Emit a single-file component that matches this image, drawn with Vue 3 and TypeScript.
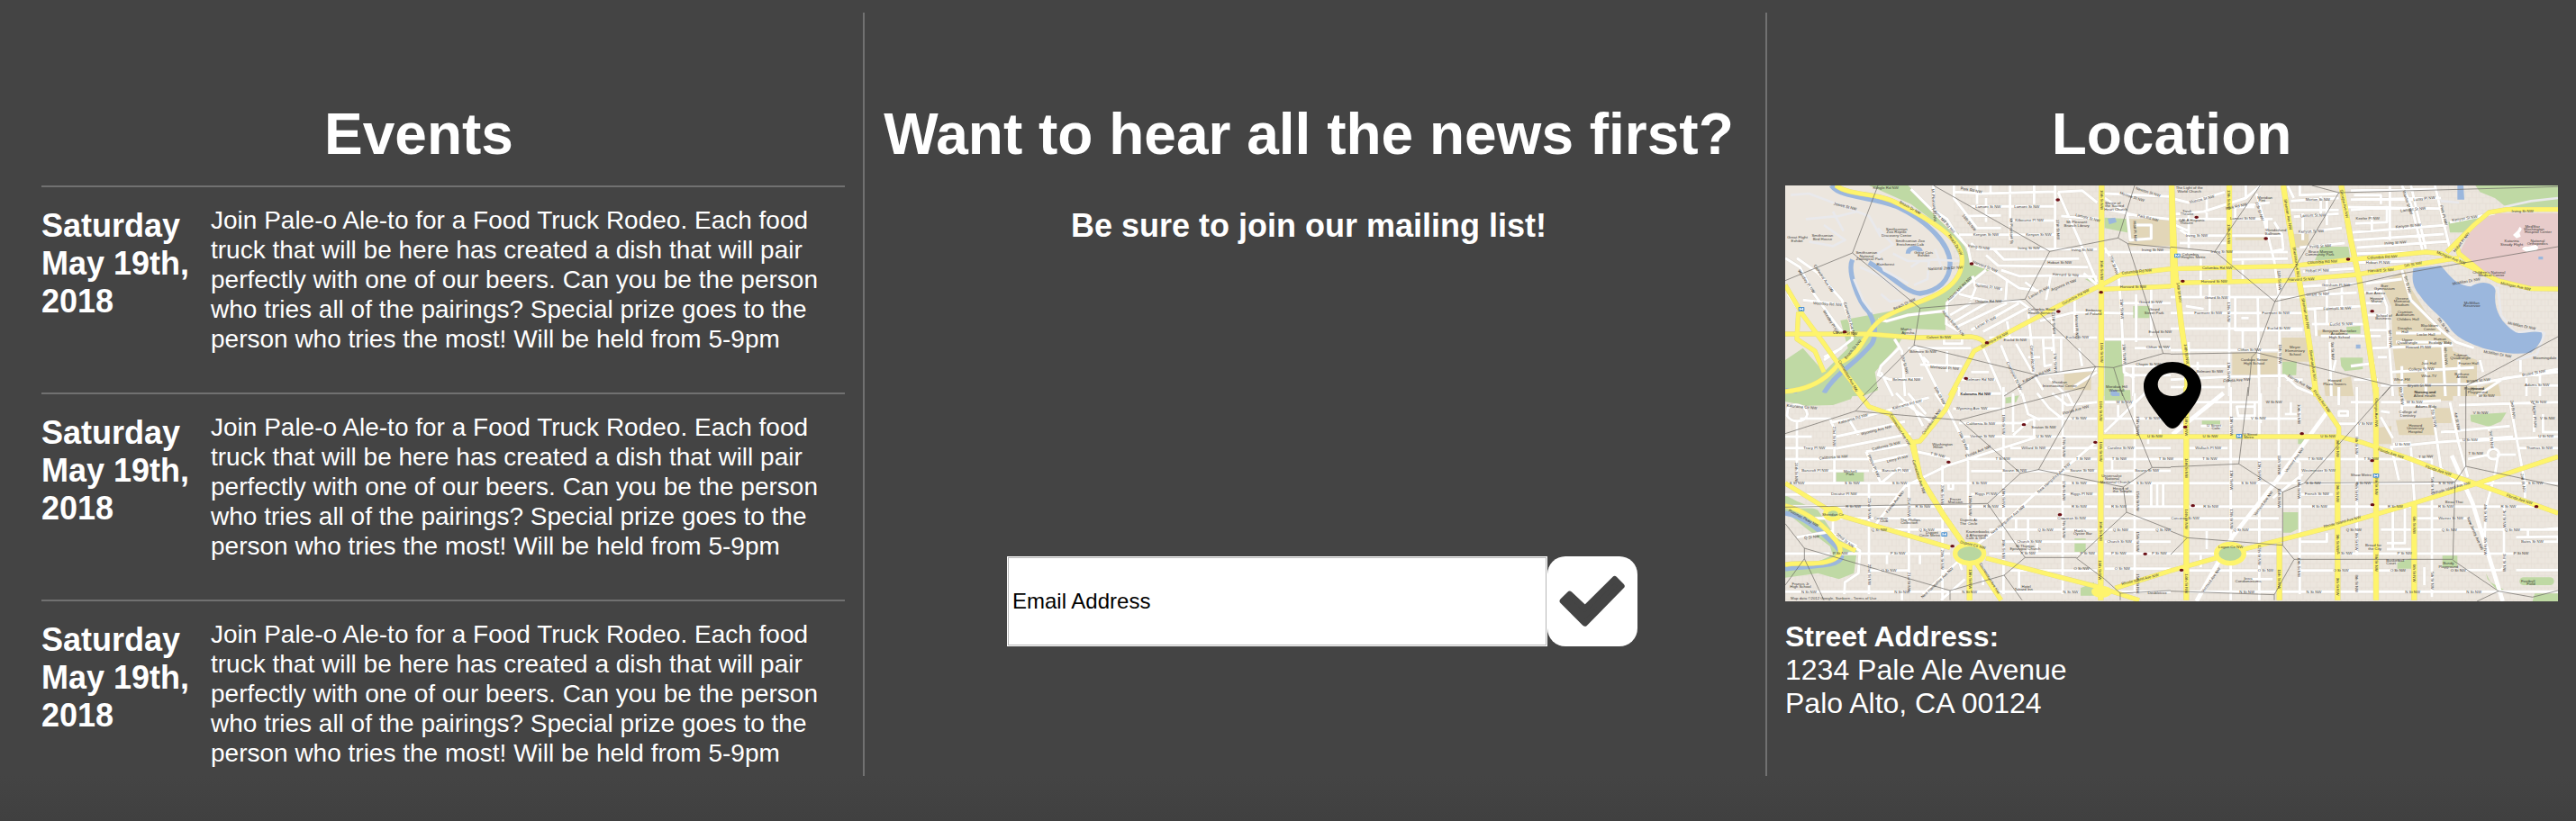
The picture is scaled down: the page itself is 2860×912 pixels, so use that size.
<script setup lang="ts">
import { ref } from 'vue'

interface EventItem {
  id: number
  date: string
  text: string
}

// x, y, rotation in degrees, text
type Label = [number, number, number, string]

interface Quarter {
  id: string
  move: string
  parks: string
  campus: string
  clinic: string
  lanes: string
  streets: string
  water: string
  river: string
  roads: string
  avenues: string
  zones: string
  stops: [number, number][]
  metros: [number, number][]
  labels: Label[]
}

const email = ref('')

const events: EventItem[] = [1, 2, 3].map((id) => ({
  id,
  date: 'Saturday May 19th, 2018',
  text: 'Join Pale-o Ale-to for a Food Truck Rodeo. Each food truck that will be here has created a dish that will pair perfectly with one of our beers. Can you be the person who tries all of the pairings? Special prize goes to the person who tries the most! Will be held from 5-9pm',
}))

const quarters: Quarter[] = [
  {
    id: 'north-west',
    move: 'translate(-21 -18)',
    parks:
      'M300 18H430L600 180 640 270 700 300 590 370 555 430V500L430 495 390 560 320 640 330 700 280 720H21V600L80 560 150 640 230 560 205 468 330 445 450 422 590 340 610 270 560 170 440 80ZM1085 125 1170 130 1175 178 1085 160ZM1085 530H1145L1150 720H1085ZM1180 420H1235V460H1180ZM1020 330 1055 325V350Z',
    campus: 'M1165 130H1305V220H1165ZM950 640H1040V700H950Z',
    clinic: '',
    lanes:
      'M40 50 100 45 220 90 300 120 340 190M90 130 200 120 260 105M150 150 220 200 180 220 100 205M180 105 215 170M330 160 380 215 330 245 350 300 430 345M440 290 470 270 520 265 600 270M380 245 430 270 500 270 495 330 450 350M520 230 545 300M250 330 280 400 310 440M340 380 370 405 410 400M270 290 340 320 400 370',
    streets:
      'M515 18V100L560 130 590 180 630 225 640 275M440 30 520 110 610 200M583 18V60L660 160H740M583 40 690 45 920 38M640 88H920M620 120 740 118M770 18V200M920 18V230M600 182H920M780 135H920M640 210 660 230H1060M715 230 750 265 1000 262M690 250 730 285 1030 290M930 40 1000 200 1060 340M930 40 1010 35 1060 75M940 120 1070 130M850 18V80M660 18V80M705 18V45M690 60V140M1085 60 1160 110 1170 200 1240 195V150H1190M1085 45 1300 55M1085 95 1200 120 1300 130M1085 225 1130 300 1140 430 1150 640 1185 660M1085 240H1305M640 275 700 295 800 360 870 370M740 300 800 320 930 318 1060 322M760 330 755 400M820 340 860 370M905 320 890 400M1015 310 1060 350M690 300 590 380 560 410 558 480 610 510M645 320 655 360 640 400M600 380 700 405 800 402 850 440M655 345 745 365M570 450 640 410M570 480 700 405M590 490 760 410M640 500 800 410M680 505 830 425M830 440 840 530M870 470 985 440 1180 445M985 400V510M910 460 920 640M1140 410H1305M1190 380V540M1240 360V520M700 525H1060M760 470 770 530M1085 530H1305M1185 560H1305M1150 620H1305M1150 650H1305M1180 620V720M21 260 70 290 110 370 190 480 215 510M60 260 130 310 210 400 240 480 245 530 180 580 150 600M80 400 210 415M30 380 70 440M330 465 360 470 430 450 560 435M385 530 410 570 420 720M400 560 340 620 330 650 370 665 480 660M455 550 540 720M430 560H640M470 615 610 620M560 570V640M600 665H720M600 690V720M680 560 750 720M740 550 810 720M790 545 850 650 880 700M840 530 850 640M880 530 885 620 910 615M910 570V560H880M940 530V640M830 590H870M1000 560 1010 620M860 650 1060 630M900 660 960 720M980 690 1060 640M600 710H760M550 530V545H610V530M340 640 380 720M480 590 500 610M640 640H700M150 590 210 560',
    water: 'M1095 128 1120 125 1125 140 1100 148ZM1105 700 1125 700 1130 720 1105 718Z',
    river:
      'M175 18C200 60 330 58 400 92C500 140 568 215 570 275C572 335 530 370 470 378C420 375 380 320 300 275M245 265C228 300 260 400 300 440C322 480 325 520 310 545C250 620 190 640 150 710M430 245C430 222 468 222 472 238M21 700 60 712',
    roads:
      'M190 18C240 55 330 40 400 80C480 120 560 170 590 210C622 250 612 300 590 330C540 400 420 410 340 465C270 520 290 570 200 610C150 680 80 700 21 705M21 513H300L450 525 640 522Q680 526 690 550M65 440 60 530 120 570 150 640M21 350 80 450 150 545 210 630 280 720M570 720 650 570 760 510 950 410 1070 352 1140 315 1305 296M1070 364 1305 354',
    avenues: 'M1075 18 1073 720M1308 18 1314 360',
    zones:
      'M330 18 245 243 21 335M245 243 470 427 450 550 280 720M470 427 820 397 902 238 515 18M902 238 1130 193 1185 18M1130 193 1162 212 1305 226M1162 212 1280 578 1305 579M820 397 1055 622 1115 625 1280 578M450 550 860 650 1055 622 1020 690M860 650 750 720M1115 625 1145 720',
    stops: [[642, 279], [929, 66], [1073, 374], [931, 438], [693, 542], [219, 506], [623, 661]],
    metros: [[75, 430]],
    labels: [
      [356, 30, 0, 'Klingle Rd NW'], [640, 38, 10, 'Park Rd NW'], [697, 92, 0, 'Lamont St NW'], [826, 92, 0, 'Lamont St NW'],
      [834, 139, 0, 'Kilbourne Pl NW'], [690, 186, 0, 'Kenyon St NW'], [865, 186, 0, 'Kenyon St NW'], [665, 228, 8, 'Irving St NW'],
      [832, 232, 0, 'Irving St NW'], [1010, 237, 0, 'Irving St NW'], [935, 279, 0, 'Hobart St NW'], [955, 320, 3, 'Harvard St NW'],
      [695, 360, 8, 'Summit Pl NW'], [698, 409, 0, 'Ontario Rd NW'], [690, 478, -28, 'Lanier Pl NW'], [868, 378, -28, 'Lanier Pl NW'],
      [950, 354, -22, 'Argonne Pl NW'], [435, 96, 30, 'Beach Dr NW'], [585, 218, 58, 'Beach Dr NW'], [420, 417, -25, 'Beach Dr NW'],
      [250, 567, -50, 'Beach Dr NW'], [220, 514, 3, 'Calvert St NW'], [532, 527, 0, 'Calvert St NW'], [720, 536, -28, 'Columbia Rd NW'],
      [990, 393, -28, 'Columbia Rd NW'], [1192, 309, -6, 'Columbia Rd NW'], [1180, 361, 0, 'Harvard St NW'], [1070, 66, 90, '16th St NW'],
      [1070, 300, 90, '16th St NW'], [1070, 575, 90, '16th St NW'], [227, 655, 60, 'Connecticut Ave NW'], [162, 417, 4, 'Woodley Rd NW'],
      [88, 340, 56, 'Woodley Pl NW'], [145, 330, 56, 'Cathedral Ave NW'], [232, 466, 74, 'Connecticut Ave NW'], [170, 475, 58, 'Woodley Pl NW'],
      [220, 92, 14, 'Jewett St NW'], [62, 195, 0, 'Great Flight'], [60, 206, 0, 'Exhibit'], [145, 188, 0, 'Smithsonian'], [145, 200, 0, 'Bird House'],
      [392, 168, 0, 'Smithsonian'], [392, 178, 0, 'Zoo Reptile'], [392, 188, 0, 'Discovery Center'], [437, 208, 0, 'Smithsonian Zoo'],
      [437, 219, 0, 'Enrichment Lab'], [482, 245, 0, 'Great Cats'], [482, 256, 0, 'Exhibit'], [292, 246, 0, 'Smithsonian'],
      [292, 257, 0, 'National'], [302, 268, 0, 'Zoological Park'], [355, 285, 0, 'Rainforest'], [555, 298, -3, 'National Zoo Dr NW'],
      [685, 292, 22, 'Harvard St NW'], [545, 138, 48, 'Adams Mill Rd NW'], [630, 145, 52, '18th St NW'], [605, 365, -45, 'Adams Mill Rd NW'],
      [577, 480, 50, 'Adams Mill Rd NW'], [992, 145, 0, 'Mt Pleasant'], [992, 156, 0, 'Branch Library'], [1112, 80, 0, 'Shrine of'],
      [1118, 91, 0, 'the Sacred'], [1122, 101, 0, 'Heart Church'], [1028, 130, 14, 'Lamont St NW'], [1175, 60, 18, 'Monroe St NW'],
      [1228, 44, 18, 'Newton St NW'], [1228, 130, 14, 'Park Rd NW'], [1245, 237, 0, 'Irving St NW'], [1112, 285, 70, '15th St NW'],
      [1138, 430, 88, '15th St NW'], [1146, 580, 88, '15th St NW'], [1238, 412, 0, 'Girard St NW'], [1250, 436, 0, 'Girard'],
      [1250, 447, 0, 'Street Park'], [1270, 510, 0, 'Euclid St NW'], [1262, 560, 0, 'Clifton St NW'], [1230, 617, 0, 'Chapin St NW'],
      [875, 436, 0, 'Columbia Road'], [875, 447, 0, 'Health Services'], [1048, 438, 0, 'Embassy'], [1048, 449, 0, 'of Poland'],
      [787, 536, 0, 'Euclid St NW'], [994, 528, 0, 'Euclid St NW'], [911, 480, 88, '17th St NW'], [988, 490, 88, 'Mozart Pl NW'],
      [424, 502, 0, 'Mama'], [430, 513, 0, 'Ayesha'], [480, 577, 0, 'Biltmore St NW'], [552, 630, 4, 'Mintwood Pl NW'],
      [425, 670, 0, 'Belmont Rd NW'], [670, 669, 0, 'Belmont Rd NW'], [655, 718, 0, 'Kalorama Rd NW'], [780, 655, 64, 'Champlain St NW'],
      [840, 595, 86, 'Ontario Rd NW'], [916, 610, 88, '17th St NW'], [860, 655, -24, 'Kalorama Rd NW'], [935, 678, 0, 'Meridian'],
      [935, 689, 0, 'International Center'], [1125, 693, 0, 'Meridian Hill'], [1125, 704, 0, 'Waterfall'], [415, 615, 74, '19th St NW'],
      [770, 170, 88, 'Mt Pleasant St'], [925, 165, 88, '17th St NW'], [512, 84, 86, 'Mt Pleasant St NW'], [1182, 170, 88, 'Hiatt Pl NW'],
    ],
  },
  {
    id: 'north-east',
    move: 'translate(1284 -18)',
    parks:
      'M1015 18H1290V90L1120 92 1080 60 1030 40ZM925 140 1030 125 990 175H930ZM500 222H592L598 262 480 268ZM565 592H640V630L580 637 568 620ZM372 605 420 600 418 650H372ZM585 490 632 486V512H588Z',
    campus:
      'M205 575H355V655H205ZM370 525H452L462 605H370ZM700 345 780 300 800 360 850 440 930 520 940 570 1020 600V720H760L740 560 735 420ZM510 675 600 655 610 720H515ZM410 180H460V225H415ZM215 190H320V200H215ZM1030 690 1090 670 1100 720H1030ZM490 500H580V520H490Z',
    clinic: 'M1070 110H1290V360L1110 350 1040 310 960 245 1010 150Z',
    lanes: 'M880 18 900 70 960 75M1110 90 1200 70 1290 60M880 285 930 345 1020 350 1090 360 1100 450 1150 510 1210 500 1245 510 1220 580 1150 600',
    streets:
      'M0 60 60 75 180 40M0 115 110 105 250 60 300 18M30 165 60 185H370M15 150 60 170M60 100V230M120 60V130M0 130H340M215 130V90H280M250 85 330 75M285 45 310 130 345 270 362 400 362 720M250 18V60M0 240H390M30 210H200M0 390H440M205 265 390 262M240 262V330M100 262V390M0 443H440M130 443V330M50 420 110 430M215 390V500H440M235 460 260 460M60 540V630M0 495H440M0 567H360M50 620H200M90 605V660M195 350V720M290 390 295 720M240 500V560M320 130V180M345 140 370 180 375 230 330 240M390 20 410 60M400 70 560 60M430 18V50L560 45M410 122 560 112M425 175 570 160M400 100H560M500 55V120M440 110V200M520 60V150M430 225 580 210M600 100 720 90V140L615 145M610 50H700V80M600 35 880 30M600 65 900 60M590 90 900 95M730 20V200M600 175 920 150M610 200 910 180M620 225 920 205M670 120V170M770 18 800 80 840 240M800 18 850 230M880 18 930 230M930 140 1080 110M440 305 610 295M440 355 620 345M450 385 620 375M450 430 640 420M520 330V480M570 350V420M470 480 650 480M480 425 485 520M650 345 770 330M620 245 810 240M620 275 800 270M640 375 700 370 720 420 725 560M650 410H700M655 450 720 450M660 500H720M640 520H700M770 300 800 400 900 500 950 540 1010 560M530 540 535 720M550 600 540 640M500 520 640 520M670 560 940 550M690 590 720 590M720 440 740 720M735 640 1010 625M700 685 1010 680 1290 630M905 540 915 720M960 600V720M1030 600 1040 640M1020 720 1110 660 1290 640M1180 685H1290M1185 660V720M1230 650V720M1165 600V640M0 665 200 655 380 652 420 690 480 715M0 690H180M50 700V720M385 665H440M600 620 680 610M610 665H690M620 690V720M770 620V720M850 600V720M750 510H900M750 540H890',
    water:
      'M808 295 900 285C930 320 950 350 1000 355C1040 330 1080 345 1082 370C1075 420 1090 470 1150 508C1180 515 1200 500 1235 508C1245 525 1220 560 1200 575C1140 585 1080 570 1040 560C1000 545 960 530 935 500C910 460 860 430 830 385C800 350 805 320 808 295ZM955 18H975L978 65H955ZM617 548H632V562H617ZM1225 255H1240V265H1225Z',
    river: '',
    roads:
      'M0 296 400 287 600 265 850 240 900 245 1000 290 1090 335 1200 362 1290 363M0 343 380 335 620 315 770 290 920 265M920 240 1010 150 1060 108 1120 98H1290M950 205 960 245 1040 310M920 265 960 260',
    avenues: 'M195 18V340M375 18 410 240 440 400 470 600 485 720M568 18 600 200 630 340 665 580 685 720M3 18 15 300 35 480 55 620V720',
    zones:
      'M298 18 147 238 0 223M147 238 347 405 560 42 470 18M560 42 1290 22M347 405 780 310 1290 222M347 405 285 575 0 580M285 575 270 590 258 720M285 575 735 685 705 720M735 685H985L1290 522M985 685V720',
    stops: [[86, 124], [317, 195], [591, 264], [40, 337], [671, 437]],
    metros: [[22, 252]],
    labels: [
      [62, 31, 0, 'The Light of the'], [62, 42, 0, 'World Church'], [105, 68, -14, 'Monroe St NW'], [220, 92, -12, 'Park Rd NW'],
      [54, 107, 0, 'Tivoli'], [54, 118, 0, 'Theatre'], [70, 137, 0, 'GALA Hispanic'], [52, 148, 0, 'Theatre'], [240, 133, 0, 'Lamont St NW'],
      [314, 62, 0, 'Meridian'], [304, 73, 0, 'Pint'], [350, 172, 0, 'Wonderland'], [340, 183, 0, 'Ballroom'], [490, 68, 0, 'Morton St NW'],
      [474, 122, -2, 'Lamont St NW'], [468, 175, -2, 'Kenyon St NW'], [656, 131, 0, 'Keefer Pl NW'], [808, 102, -6, 'Lamont St NW'],
      [792, 157, -5, 'Kenyon St NW'], [845, 66, -6, 'Luray Pl NW'], [748, 213, -3, 'Irving St NW'], [498, 224, -3, 'Irving St NW'],
      [170, 243, 0, 'Irving St NW'], [87, 188, 0, 'Irving St NW'], [500, 242, 0, 'Bruce Monroe'], [496, 253, 0, 'Community Park'],
      [155, 296, 0, 'Columbia Rd NW'], [505, 277, -3, 'Columbia Rd NW'], [705, 261, -3, 'Columbia Rd NW'], [145, 343, 0, 'Harvard St NW'],
      [435, 335, -2, 'Harvard St NW'], [700, 305, -3, 'Harvard St NW'], [690, 278, 0, 'Hobart Pl NW'], [488, 306, -2, 'Hobart Pl NW'],
      [65, 251, 0, 'Columbia'], [75, 262, 0, 'Heights Metro'], [152, 395, 0, 'Girard St NW'], [550, 353, 0, 'Gresham Pl NW'],
      [490, 385, -3, 'Girard St NW'], [125, 447, 0, 'Fairmont St NW'], [350, 447, 0, 'Fairmont St NW'], [555, 432, -2, 'Fairmont St NW'],
      [360, 499, 0, 'Euclid St NW'], [568, 484, -2, 'Euclid St NW'], [262, 571, 0, 'Clifton St NW'], [130, 641, 0, 'Belmont St NW'],
      [220, 671, -4, 'Florida Ave NW'], [428, 678, 30, 'Florida Ave NW'], [414, 562, 0, 'Meyer'], [414, 573, 0, 'Elementary'], [414, 584, 0, 'School'],
      [278, 604, 0, 'Cardozo Senior'], [278, 615, 0, 'High School'], [562, 507, 0, 'Benjamin Banneker'], [562, 517, 0, 'Academic'], [562, 527, 0, 'High School'],
      [546, 672, 0, 'Howard'], [546, 683, 0, 'Plaza Towers'], [712, 356, 0, 'Burr'], [712, 367, 0, 'Gymnasium'], [682, 382, 0, 'Burr Annex'],
      [686, 398, 0, 'Howard'], [686, 409, 0, 'Manor'], [770, 398, 0, 'Greene'], [770, 409, 0, 'Memorial'], [770, 419, 0, 'Stadium'],
      [710, 455, 0, 'School of'], [708, 466, 0, 'Business'], [780, 444, 0, 'Cramton'], [780, 454, 0, 'Auditorium'], [790, 467, 0, 'Childers Hall'],
      [780, 499, 0, 'Douglas'], [780, 510, 0, 'Hall'], [862, 490, 0, 'Blackburn'], [862, 501, 0, 'Center'], [850, 519, 0, 'Locke Hall'],
      [788, 536, 0, 'Upper'], [788, 547, 0, 'Quadrangle'], [897, 534, 0, 'Human'], [897, 545, 0, 'Ecology Bldg'], [825, 562, 0, 'Howard Pl NW'],
      [835, 634, -2, 'College St NW'], [828, 689, -1, 'Bryant St NW'], [1025, 672, -4, 'Bryant St NW'], [1210, 647, -10, 'Bryant St NW'],
      [1220, 688, 0, 'Adams St NW'], [965, 587, 0, 'Tubman'], [965, 598, 0, 'Quadrangle'], [992, 615, 0, 'Frazier Hall'],
      [970, 650, 0, 'Bethune'], [970, 661, 0, 'Annex'], [1022, 700, 0, 'Howard'], [1022, 711, 0, 'Playground'], [1246, 598, 0, 'Bloomingdale'],
      [1003, 413, 0, 'McMillan'], [1003, 424, 0, 'Reservoir'], [1172, 108, 0, 'Irving St NW'], [980, 132, -8, 'Kenyon St NW'],
      [972, 210, -52, 'Hobart Pl NW'], [932, 263, 22, 'Michigan Ave NW'], [1148, 358, 12, 'Michigan Ave NW'], [808, 285, -10, '5th St NW'],
      [1060, 311, 0, 'Children’s National'], [1068, 321, 0, 'Medical Center'], [1205, 158, 0, 'MedStar'], [1210, 168, 0, 'Washington'],
      [1224, 178, 0, 'Hospital Center'], [1136, 208, 0, 'Katarina'], [1136, 219, 0, 'Steady Flight'], [1222, 206, 0, 'National'],
      [1222, 217, 0, 'Orthopedics'], [985, 342, -10, 'McMillan Dr NW'], [1168, 490, 12, 'McMillan Dr NW'], [1088, 584, 10, 'McMillan Dr NW'],
      [860, 614, 0, 'Just Hall'], [770, 668, 0, 'Whur-FM'], [860, 658, 0, 'Whut-TV'], [848, 712, 0, 'Nursing and'],
      [190, 66, 90, '13th St NW'], [190, 180, 90, '13th St NW'], [190, 440, 90, '13th St NW'], [190, 640, 90, '13th St NW'],
      [386, 115, 80, 'Sherman Ave NW'], [414, 275, 82, 'Sherman Ave NW'], [445, 445, 80, 'Sherman Ave NW'], [469, 618, 82, 'Sherman Ave NW'],
      [574, 80, 78, 'Georgia Ave NW'], [24, 375, 82, '14th St NW'], [48, 580, 84, '14th St NW'], [358, 335, 86, '11th St NW'],
      [360, 580, 90, '11th St NW'], [292, 105, 72, '11th St NW'], [785, 76, 72, 'Warder St NW'], [905, 118, 76, 'Park Pl NW'],
      [785, 350, 74, '5th St NW'], [905, 487, 55, '5th St NW'], [727, 530, 86, '6th St NW'], [912, 587, 86, '4th St NW'], [535, 570, 88, '9th St NW'],
    ],
  },
  {
    id: 'south-west',
    move: 'translate(-21 672)',
    parks:
      'M21 20H250L240 40 180 60 90 62 21 48ZM190 283H283V315H190ZM1085 10H1170L1172 45H1085ZM21 360 60 380 130 410 190 500 260 545 250 620 200 640 130 620 21 635 21 600 110 590 180 560 170 530 90 470 21 415ZM985 505H1022V550H985ZM755 35 800 28 790 50 755 55ZM1005 670 1050 650 1050 695H1005Z',
    campus: '',
    clinic: '',
    lanes: '',
    streets:
      'M30 70C50 50 90 60 95 90C90 120 40 120 27 95ZM60 115V300M21 165H110M70 105H170L185 140V320M21 203H180M21 240H300M70 279H300M170 118 300 95 480 45M235 110 265 160M190 165 420 115M190 205 440 155M290 215 440 190M310 250 430 225M290 215 340 320M340 320 400 270 420 285M21 320H1060M21 358H400M21 398H1060M310 279H440M300 320V690M433 320V640M545 260V710M630 190V460M565 325V340H580V325M320 460 420 330 560 262 850 170 850 110M850 105 1060 105M600 22H740M580 72H740M600 120H810L850 105M610 165H1060M460 215 530 230 570 240M560 70 600 150 635 230M520 20 560 75M390 20 430 60 520 125M430 20 490 90M400 60 500 35M440 50 480 130M748 0V690M780 20V150M810 20 830 90 870 110M860 20 900 70 950 110M780 160 830 115M770 203H1060M640 240H1060M640 280H1060M640 357H1060M640 437H1060M120 437H545M310 475H570M700 475H1060M740 515H1060M700 555H1060M21 555H170M200 555H570M200 500 270 545 265 620 220 650 218 690M60 500 180 480M180 430 180 490 260 530M300 611H430M545 611H560M360 560V590M770 611H1060M21 682H1000M945 20V690M1060 180 870 340 720 480 640 540 480 690M540 710 620 640M790 437V480M830 437V550M860 520V550M1185 20V690M1085 50H1190M1085 105H1305M1085 203H1305M1085 240H1305M1085 279H1305M1085 320H1305M1085 357H1190M1085 398H1305M1085 437H1305M1085 475H1305M1085 515H1305M1085 555H1305M1085 605H1305M1100 682H1305M1085 150 1220 20M1230 170V190M1270 140V165M1110 240V280H1160M1240 320V398M1260 320V398M1280 320V398M1130 60V100M910 20 960 60 1060 50M960 20 980 60M600 580 610 610M680 600V660M470 560V590M410 680V710M800 610V680',
    water: 'M1110 18H1135V30H1110Z',
    river: 'M21 420C80 430 130 470 180 520C220 560 220 580 170 590C110 600 60 600 21 606',
    roads:
      'M250 0 300 65 370 90 440 180 470 300 545 420 620 530M590 0 555 75 470 180 440 185M21 320 150 400 210 430 570 535M690 570 1060 665 1200 710M620 530 740 710M1120 670 1305 612M1080 165H1305M21 395C80 410 140 450 180 500C220 540 210 570 160 582C110 595 60 582 21 592M200 520 255 545',
    avenues: 'M1072 0V710M635 590V710M445 180 470 300 550 430 620 530',
    zones:
      'M21 155 255 80 330 0M255 80 602 110 1020 0M602 110 805 287 865 275 1020 0M865 275 1147 333 1243 268 1135 0M1243 268H1305M1147 333 1158 417 992 571 1085 640 1137 687 1305 678M1158 417 1305 475M21 400 695 388 805 287M695 388 820 568H992M820 568 750 627 570 678 85 537 21 455M85 537V572L21 660M85 572 150 710M570 678V710M750 627 810 710M1137 687V710',
    stops: [[816, 125], [1054, 184], [565, 250], [936, 425], [578, 530], [1220, 556]],
    metros: [[551, 491]],
    labels: [
      [76, 70, 5, 'Kalorama Cir NW'], [248, 110, -16, 'Kalorama Rd NW'], [428, 62, -15, 'Kalorama Rd NW'], [655, 27, 0, 'Kalorama Rd NW'],
      [642, 76, 0, 'Wyoming Ave NW'], [325, 148, -14, 'Wyoming Ave NW'], [672, 125, 0, 'California St NW'], [358, 200, -14, 'California St NW'],
      [678, 169, 0, 'Vernon St NW'], [882, 168, 0, 'U St NW'], [1000, 109, 0, 'V St NW'], [882, 138, 0, 'Seaton St NW'], [118, 206, 0, 'Tracy Pl NW'],
      [182, 238, -4, 'California St NW'], [396, 243, -14, 'Leroy Pl NW'], [120, 283, 0, 'Bancroft Pl NW'], [388, 283, 0, 'Bancroft Pl NW'],
      [237, 284, 0, 'Mitchell'], [237, 294, 0, 'Park'], [848, 207, 0, 'Willard St NW'], [746, 244, 0, 'T St NW'], [1014, 244, 0, 'T St NW'],
      [1134, 244, 0, 'T St NW'], [1290, 244, 0, 'T St NW'], [785, 283, 0, 'Swann St NW'], [1010, 283, 0, 'Swann St NW'], [1226, 283, 0, 'Swann St NW'],
      [60, 323, 0, 'S St NW'], [244, 323, 0, 'S St NW'], [402, 323, 0, 'S St NW'], [668, 323, 0, 'S St NW'], [1000, 323, 0, 'S St NW'],
      [1215, 323, 0, 'S St NW'], [217, 361, 0, 'Decatur Pl NW'], [690, 361, 0, 'Riggs Pl NW'], [1008, 361, 0, 'Riggs Pl NW'], [248, 402, 0, 'R St NW'],
      [480, 402, 0, 'R St NW'], [706, 402, 0, 'R St NW'], [1000, 402, 0, 'R St NW'], [1132, 402, 0, 'R St NW'], [975, 440, 0, 'Corcoran St NW'],
      [334, 480, 0, 'Q St NW'], [492, 480, 0, 'Q St NW'], [888, 480, 0, 'Q St NW'], [1138, 480, 0, 'Q St NW'], [1280, 480, 0, 'Q St NW'],
      [834, 518, 0, 'Church St NW'], [1134, 518, 0, 'Church St NW'], [205, 558, 0, 'P St NW'], [396, 558, 0, 'P St NW'], [830, 558, 0, 'P St NW'],
      [1028, 558, 0, 'P St NW'], [1132, 558, 0, 'P St NW'], [1267, 558, 0, 'P St NW'], [366, 615, 0, 'O St NW'], [1008, 608, 0, 'O St NW'],
      [1144, 608, 0, 'O St NW'], [100, 686, 0, 'N St NW'], [410, 686, 0, 'N St NW'], [635, 686, 0, 'N St NW'], [972, 686, 0, 'N St NW'],
      [1252, 168, 0, 'U St NW'], [1244, 109, 0, 'V St NW'], [1150, 54, 0, 'W St NW'], [1138, 207, 0, 'Caroline St NW'], [545, 195, 0, 'Washington'],
      [530, 205, 0, 'Hilton'], [528, 230, 14, 'T St NW'], [340, 440, 0, 'Cosmos'], [350, 451, 0, 'Club'], [438, 446, 0, 'The Phillips'],
      [434, 457, 0, 'Collection'], [588, 378, 0, 'Fraser'], [588, 388, 0, 'Mansion'], [632, 448, 0, 'Dupont At'], [632, 459, 0, 'The Circle'],
      [510, 488, 0, 'Dupont'], [502, 499, 0, 'Circle Metro'], [662, 486, 0, 'Kramerbooks'], [660, 497, 0, '& Afterwords'], [656, 507, 0, 'Cafe & Grill'],
      [820, 534, 0, 'St Thomas'], [820, 544, 0, 'Episcopal Church'], [1004, 482, 0, 'Hank’s'], [1012, 493, 0, 'Oyster Bar'], [1108, 300, 0, 'Universalist'],
      [1110, 310, 0, 'National'], [1120, 320, 0, 'Memorial Church'], [1138, 341, 0, 'House of'], [1144, 351, 0, 'the Temple'],
      [824, 668, 0, 'Hotel'], [815, 679, 0, 'Tabard Inn'], [1260, 690, 0, 'Doubletree'], [72, 660, 0, 'Francis Jr'], [72, 670, 0, 'High School'],
      [400, 145, 58, 'Connecticut Ave NW'], [462, 300, 72, 'Connecticut Ave NW'], [698, 640, 58, 'Connecticut Ave NW'], [512, 118, -55, 'Columbia Rd NW'],
      [665, 218, -22, 'Florida Ave NW'], [990, 80, -16, 'Florida Ave NW'], [390, 385, -52, 'Florida Ave NW'], [80, 440, 28, 'Potomac Pkwy NW'],
      [218, 515, 38, '22nd St NW'], [110, 504, -6, 'Q St NW'], [180, 430, 0, 'Sheridan Cir'], [645, 530, 14, 'Dupont Cir NW'],
      [918, 306, -42, 'New Hampshire Ave NW'], [765, 445, -40, 'New Hampshire Ave NW'], [530, 655, -44, 'New Hampshire Ave NW'],
      [1204, 645, -14, 'Rhode Island Ave NW'], [1068, 80, 90, '16th St NW'], [1068, 215, 90, '16th St NW'], [1068, 480, 90, '16th St NW'],
      [1064, 610, 90, '16th St NW'], [944, 200, 90, '17th St NW'], [944, 345, 90, '17th St NW'], [944, 470, 90, '17th St NW'],
      [744, 125, 90, '18th St NW'], [744, 370, 90, '18th St NW'], [744, 540, 90, '18th St NW'], [632, 640, 90, '19th St NW'],
      [632, 395, 90, '19th St NW'], [540, 360, 90, '20th St NW'], [540, 575, 90, '20th St NW'], [429, 400, 90, '21st St NW'],
      [429, 650, 90, '21st St NW'], [296, 405, 90, '22nd St NW'], [296, 625, 90, '22nd St NW'], [1190, 130, 90, '15th St NW'],
      [1190, 380, 90, '15th St NW'], [1190, 515, 90, '15th St NW'], [1190, 655, 90, '15th St NW'], [55, 285, 90, '24th St NW'],
      [180, 165, 90, '23rd St NW'], [312, 265, 66, 'Phelps Pl NW'], [610, 180, 68, '19th St NW'], [532, 30, 62, '19th St NW'],
      [182, 708, 0, 'Map data ©2012 Google, Sanborn - Terms of Use'],
    ],
  },
  {
    id: 'south-east',
    move: 'translate(1284 672)',
    parks:
      'M375 417H435V475H420L400 485H375ZM998 92 1118 85 1100 115 1060 132 1000 115ZM424 172H448L435 190H424ZM104 112H165V130H104ZM905 562H955V600H905ZM755 585 802 570V605H755ZM1213 686H1290V714H1205ZM1050 620 1065 650 1110 675 1090 680 1055 640Z',
    campus:
      'M770 18 860 30 940 20V45H860L810 60 780 40ZM690 135 735 130V190H692ZM750 110 880 100V160H760ZM880 70H935V120H880ZM970 10H1090V20H970Z',
    clinic: '',
    lanes: '',
    streets:
      'M0 105H60M100 130H170M55 50H300M60 105H430M280 50V110M220 65H280V95H225ZM300 20V120M400 50V90M380 90H420M560 0V60M560 80H590V95H560ZM600 50H690M560 122H690M360 0V260M430 60V110M430 250V690M60 203H190M0 240H870M430 279H550M0 320H430M430 320H1290M430 358H540M0 398H800M0 437H360M60 475H370M120 480V540M200 0V710M295 0V710M620 0V560M0 555H150M240 555H1140M60 611H340M430 611H740M430 515H520V485M60 682H1290M740 410V540M780 400V520H720M720 540H800M700 475H800M820 475H1290M820 437H990M820 398H1240M870 240V700M800 200 812 380M845 600V660M735 200 760 310M700 50 800 50 900 45M700 80 730 85M700 100 740 170M730 200 870 185 1140 165M770 100V60L860 60M740 190 800 185M870 60 900 270 945 310M930 50 960 190 990 300M960 60 1290 50M900 150 1130 130M990 180 1290 165M990 240 1060 225M1085 225H1150M1090 230 1080 290 1050 400 1045 520M1060 140 1075 205M1075 205C1050 210 1050 240 1075 240C1100 240 1100 210 1075 205ZM1130 50 1150 160 1180 320 1180 370M1210 50V150M1240 90V150H1290M1160 203H1290M1110 398V600L1100 610H970M1150 500 1290 498 1290 515H1165M1190 475V500M1150 610H1290M1240 475 1290 470M340 370 440 290M250 640H340M100 560V600M400 240 430 250',
    water: '',
    river: '',
    roads:
      'M0 165H560L640 185 800 240 940 295 1040 330 1290 420M0 612 150 570M245 540 560 460 800 390 1030 318 1290 232M470 0 510 60 560 135V170',
    avenues: 'M52 0V710M556 165V710M684 0V710M811 390V710M362 520V710',
    zones:
      'M258 0 227 256 0 266M227 256 373 350V527L411 574H940L947 316 445 320 373 350M445 320 730 0M373 527 55 502 0 480M55 502 0 558M411 574 345 692 0 680M947 316 983 264V0M983 264 1290 330M940 577 1092 680 1020 714M1092 680 1205 700 1290 678M345 692V710',
    stops: [[48, 133], [437, 155], [671, 245], [672, 392], [1218, 398], [74, 395], [36, 610]],
    metros: [[228, 163], [684, 295]],
    labels: [
      [344, 53, 0, 'W St NW'], [292, 109, 0, 'V St NW'], [648, 127, 0, 'V St NW'], [144, 131, 0, 'U Street'], [150, 141, 0, 'Cafe'], [132, 168, 0, 'U St NW'],
      [524, 168, 0, 'U St NW'], [265, 162, 0, 'U Street'], [260, 172, 0, 'Metro'], [125, 207, 0, 'Wallach Pl NW'], [130, 244, 0, 'T St NW'],
      [482, 244, 0, 'T St NW'], [668, 244, 0, 'T St NW'], [850, 236, -3, 'T St NW'], [1016, 224, 0, 'T St NW'], [492, 283, 0, 'Westminster St NW'],
      [260, 323, 0, 'S St NW'], [475, 323, 0, 'S St NW'], [642, 323, 0, 'S St NW'], [917, 323, 0, 'S St NW'], [1215, 323, 0, 'S St NW'],
      [487, 361, 0, 'French St NW'], [134, 402, 0, 'R St NW'], [496, 402, 0, 'R St NW'], [748, 402, 0, 'R St NW'], [916, 402, 0, 'R St NW'],
      [1125, 402, 0, 'R St NW'], [48, 440, 0, 'Corcoran St NW'], [933, 440, 0, 'Warner St NW'], [234, 480, 0, 'Q St NW'], [610, 480, 0, 'Q St NW'],
      [928, 480, 0, 'Q St NW'], [1138, 480, 0, 'Q St NW'], [1204, 519, 0, 'Bates St NW'], [580, 558, 0, 'P St NW'], [779, 558, 0, 'P St NW'],
      [1167, 558, 0, 'P St NW'], [316, 615, 0, 'O St NW'], [567, 615, 0, 'O St NW'], [757, 615, 0, 'O St NW'], [958, 615, 0, 'O St NW'],
      [254, 686, 0, 'N St NW'], [477, 686, 0, 'N St NW'], [806, 686, 0, 'N St NW'], [1010, 686, 0, 'N St NW'], [634, 298, 0, 'Shaw Metro'],
      [846, 22, 0, 'Nursing and'], [846, 32, 0, 'Allied Health'], [812, 54, 0, 'W St NW'], [850, 70, 0, 'Adams Bldg'], [790, 88, 0, 'College of'],
      [790, 98, 0, 'Dentistry'], [815, 132, 0, 'Howard'], [815, 142, 0, 'University'], [815, 152, 0, 'Hospital'], [772, 196, 0, 'U St NW'],
      [997, 180, 0, 'U St NW'], [1032, 89, 0, 'V St NW'], [1052, 34, 0, 'W St NW'], [1225, 54, 0, 'W St NW'], [1255, 109, 0, 'V St NW'],
      [1250, 168, 0, 'U St NW'], [1228, 207, 0, 'Thomas St NW'], [1010, 10, 0, 'Playground'], [944, 388, 0, 'Beau Thai'], [675, 531, 0, 'Bread for'],
      [680, 542, 0, 'the City'], [748, 582, 0, 'Basketball'], [734, 592, 0, 'Court'], [925, 592, 0, 'Bundy'], [925, 602, 0, 'Playground'],
      [1190, 650, 0, 'Football'], [1200, 661, 0, 'Field'], [258, 642, 0, 'Iowa'], [258, 652, 0, 'Condominiums'],
      [732, 225, 18, 'Florida Ave NW'], [890, 282, 18, 'Florida Ave NW'], [1160, 378, 18, 'Florida Ave NW'], [500, 50, 55, 'Florida Ave NW'],
      [938, 340, -16, 'Rhode Island Ave NW'], [572, 453, -15, 'Rhode Island Ave NW'], [200, 536, 0, 'Logan Cir NW'], [415, 245, -54, 'Vermont Ave NW'],
      [312, 390, -54, 'Vermont Ave NW'], [138, 645, -54, 'Vermont Ave NW'], [1010, 490, 66, 'New Jersey Ave NW'], [48, 130, 90, '14th St NW'],
      [48, 270, 90, '14th St NW'], [48, 440, 90, '14th St NW'], [48, 655, 90, '14th St NW'], [197, 130, 90, '13th St NW'], [197, 310, 90, '13th St NW'],
      [197, 440, 90, '13th St NW'], [292, 280, 90, '12th St NW'], [292, 560, 90, '12th St NW'], [358, 260, 90, '11th St NW'], [358, 370, 90, '11th St NW'],
      [358, 640, 90, '11th St NW'], [424, 90, 90, '10th St NW'], [424, 340, 90, '10th St NW'], [424, 600, 90, '10th St NW'], [552, 205, 90, '9th St NW'],
      [552, 355, 90, '9th St NW'], [552, 520, 90, '9th St NW'], [552, 665, 90, '9th St NW'], [616, 195, 90, '8th St NW'], [616, 515, 90, '8th St NW'],
      [616, 350, 90, '8th St NW'], [616, 655, 90, '8th St NW'], [680, 85, 90, 'Georgia Ave NW'], [680, 330, 90, '7th St NW'], [680, 585, 90, '7th St NW'],
      [807, 460, 90, '6th St NW'], [807, 620, 90, '6th St NW'], [868, 330, 90, '5th St NW'], [868, 645, 90, '5th St NW'], [1044, 420, 90, '4th St NW'],
      [1044, 530, 90, '4th St NW'], [1106, 440, 90, '3rd St NW'], [1106, 585, 90, '3rd St NW'], [950, 115, 80, '4th St NW'], [1136, 75, 82, '2nd St NW'],
      [1064, 175, 84, '3rd St NW'], [1208, 95, 86, 'Flagler Pl NW'], [1170, 320, 82, '2nd St NW'], [765, 30, 84, '6th St NW'], [872, 105, 80, '5th St NW'],
    ],
  },
]
</script>

<template>
  <main class="page">
    <section class="column events">
      <h1>Events</h1>
      <article v-for="event in events" :key="event.id" class="event">
        <h2 class="event-date">{{ event.date }}</h2>
        <p>{{ event.text }}</p>
      </article>
    </section>

    <section class="column news">
      <h1>Want to hear all the news first?</h1>
      <h2>Be sure to join our mailing list!</h2>
      <form class="signup" @submit.prevent>
        <input v-model="email" type="email" placeholder="Email Address" aria-label="Email Address" />
        <button type="submit" aria-label="Join the mailing list">
          <svg viewBox="0 0 300 300" aria-hidden="true">
            <path d="M51 149 74 126 125 174 224 76 247 99 125 223Z" />
          </svg>
        </button>
      </form>
    </section>

    <section class="column location">
      <h1>Location</h1>
      <svg class="map" viewBox="0 0 2574 1386" role="img" aria-label="Map of the neighborhood">
        <defs>
          <pattern id="lots" width="46" height="40" patternUnits="userSpaceOnUse">
            <path d="M0 0H46M0 0V40M23 0V20M0 20H46M12 20V40M34 20V40" class="lot" />
          </pattern>
        </defs>
        <rect width="2574" height="1386" class="land" />
        <rect x="560" width="2014" height="1386" fill="url(#lots)" />
        <rect y="700" width="560" height="686" fill="url(#lots)" />
        <g v-for="q in quarters" :key="'ground-' + q.id" :transform="q.move">
          <path :d="q.parks" class="park" />
          <path :d="q.campus" class="campus" />
          <path :d="q.clinic" class="clinic" />
          <path :d="q.river" class="river" />
        </g>
        <g v-for="q in quarters" :key="'streets-' + q.id" :transform="q.move">
          <path :d="q.lanes" class="lane" />
          <path :d="q.streets" class="street-edge" />
          <path :d="q.streets" class="street" />
          <path :d="q.water" class="water" />
        </g>
        <path d="M1460 692 1290 830M1805 755 1640 980 1490 1170 1370 1386M2220 900 2290 1060 2390 1386" class="boulevard" />
        <rect x="2446" y="1306" width="115" height="26" rx="13" class="field" />
        <g v-for="q in quarters" :key="'roads-' + q.id" :transform="q.move">
          <path :d="q.roads" class="road-edge" />
          <path :d="q.avenues" class="avenue-edge" />
        </g>
        <g v-for="q in quarters" :key="'fills-' + q.id" :transform="q.move">
          <path :d="q.roads" class="road" />
          <path :d="q.avenues" class="avenue" />
        </g>
        <ellipse cx="614" cy="1227" rx="48" ry="32" class="circle" />
        <ellipse cx="1482" cy="1227" rx="46" ry="32" class="circle" />
        <ellipse cx="159" cy="1094" rx="25" ry="18" class="circle" />
        <ellipse cx="1054" cy="1354" rx="34" ry="20" class="road-fill" />
        <path d="M2424 165 2440 150 2446 138Q2460 142 2446 158L2450 170 2436 176ZM2454 212Q2460 200 2474 204L2500 198Q2516 206 2500 218L2470 222Z" class="building" />
        <g v-for="q in quarters" :key="'marks-' + q.id" :transform="q.move">
          <path :d="q.zones" class="zone" />
          <text
            v-for="(label, i) in q.labels"
            :key="i"
            :transform="`translate(${label[0]} ${label[1]}) rotate(${label[2]})`"
            class="label"
          >{{ label[3] }}</text>
          <ellipse v-for="(stop, i) in q.stops" :key="'s' + i" :cx="stop[0]" :cy="stop[1]" rx="7" ry="5" class="stop" />
          <g v-for="(metro, i) in q.metros" :key="'m' + i" :transform="`translate(${metro[0]} ${metro[1]})`">
            <rect x="-10" y="-7" width="20" height="14" rx="2" class="metro" />
            <path d="M-5 4V-4L0 2 5 -4V4" class="metro-mark" />
          </g>
        </g>
        <path
          d="M1290 588C1236 588 1194 628 1194 668C1194 704 1214 730 1268 798Q1290 822 1312 798C1366 730 1386 704 1386 668C1386 628 1344 588 1290 588ZM1290 624C1318 624 1340 640 1340 663C1340 686 1318 702 1290 702C1262 702 1241 686 1241 663C1241 640 1262 624 1290 624Z"
          class="pin"
        />
      </svg>
      <address>
        <strong>Street Address:</strong><br />
        1234 Pale Ale Avenue<br />
        Palo Alto, CA 00124
      </address>
    </section>
  </main>
</template>

<style>
body {
  margin: 0;
  background: #444;
}
</style>

<style scoped>
.page {
  box-sizing: border-box;
  min-height: 100vh;
  padding: 14px 0 50px;
  display: grid;
  grid-template-columns: 480fr 501fr 449fr;
  align-items: stretch;
  color: #fff;
  background: linear-gradient(to top, #404040, #444 50px);
  font-family: "Liberation Sans", Arial, Helvetica, sans-serif;
}

.column {
  box-sizing: border-box;
  min-width: 0;
  padding: 98px 20px 0;
  border-right: 2px solid #717171;
}

.events {
  padding-left: 46px;
}

.location {
  border-right: 0;
}

h1 {
  margin: 0 0 20px;
  font-size: 64px;
  line-height: 74px;
  text-align: center;
}

.events h1 {
  padding-right: 54px;
}

.event {
  display: grid;
  grid-template-columns: 188px 1fr;
  padding: 20px 0 43px;
  border-top: 2px solid #717171;
}

.event:last-child {
  padding-bottom: 9px;
}

h2 {
  margin: 0;
  font-size: 36px;
  line-height: 42px;
}

.event-date {
  padding: 2px 16px 0 0;
}

p {
  margin: 0;
  font-size: 28px;
  line-height: 33px;
}

.news h1,
.news h2 {
  padding-right: 14px;
  text-align: center;
}

.news h2 {
  padding-top: 24px;
}

.signup {
  display: flex;
  justify-content: center;
  margin-top: 346px;
  padding-left: 16px;
}

input {
  box-sizing: border-box;
  width: 600px;
  height: 100px;
  padding: 0 5px;
  border: 1px solid #fff;
  border-radius: 0;
  outline: 0;
  background: #fff;
  box-shadow: inset 0 0 0 1px #b8b8b8;
  color: #000;
  font: 24px "Liberation Sans", Arial, Helvetica, sans-serif;
}

input::placeholder {
  color: #000;
  opacity: 1;
}

button {
  width: 100px;
  height: 100px;
  padding: 0;
  border: 0;
  border-radius: 20px;
  background: #fff;
  cursor: pointer;
}

button svg {
  display: block;
  width: 100%;
  height: 100%;
  fill: #444;
  stroke: #444;
  stroke-width: 20;
  stroke-linejoin: round;
}

.map {
  display: block;
  width: 100%;
  aspect-ratio: 858 / 462;
  overflow: hidden;
}

.map path {
  fill: none;
  stroke-linejoin: round;
}

.land {
  fill: #ece6de;
}

.map .lot {
  stroke: #e2dbd2;
  stroke-width: 2;
}

.map .park,
.field {
  fill: #bfd9a4;
}

.map .campus {
  fill: #e2d6b8;
}

.map .clinic {
  fill: #e8cccb;
}

.map .water {
  fill: #9bb7dd;
}

.map .river {
  stroke: #9bb7dd;
  stroke-width: 16;
}

.map .lane {
  stroke: #e9e9ec;
  stroke-width: 8;
}

.map .street-edge {
  stroke: #dcd6cc;
  stroke-width: 11;
}

.map .street {
  stroke: #fff;
  stroke-width: 9;
}

.map .boulevard {
  stroke: #fff;
  stroke-width: 14;
}

.map .road-edge {
  stroke: #e3d981;
  stroke-width: 16;
}

.map .road {
  stroke: #fef46c;
  stroke-width: 14;
}

.map .avenue-edge {
  stroke: #e3d981;
  stroke-width: 19;
}

.map .avenue {
  stroke: #fef46c;
  stroke-width: 17;
}

.circle {
  fill: #b9d7a0;
  stroke: #fef46c;
  stroke-width: 16;
}

.road-fill {
  fill: #fef46c;
}

.map .building {
  fill: #fff;
}

.map .zone {
  stroke: #66635f;
  stroke-width: 2;
}

.label {
  fill: #3d3b38;
  font-size: 13px;
  text-anchor: middle;
}

.stop {
  fill: #6b0f16;
}

.metro {
  fill: #4a90d0;
}

.map .metro-mark {
  stroke: #fff;
  stroke-width: 3;
}

.map .pin {
  fill: #000;
  fill-rule: evenodd;
}

address {
  margin-top: 21px;
  font-size: 32px;
  line-height: 37px;
  font-style: normal;
}
</style>
